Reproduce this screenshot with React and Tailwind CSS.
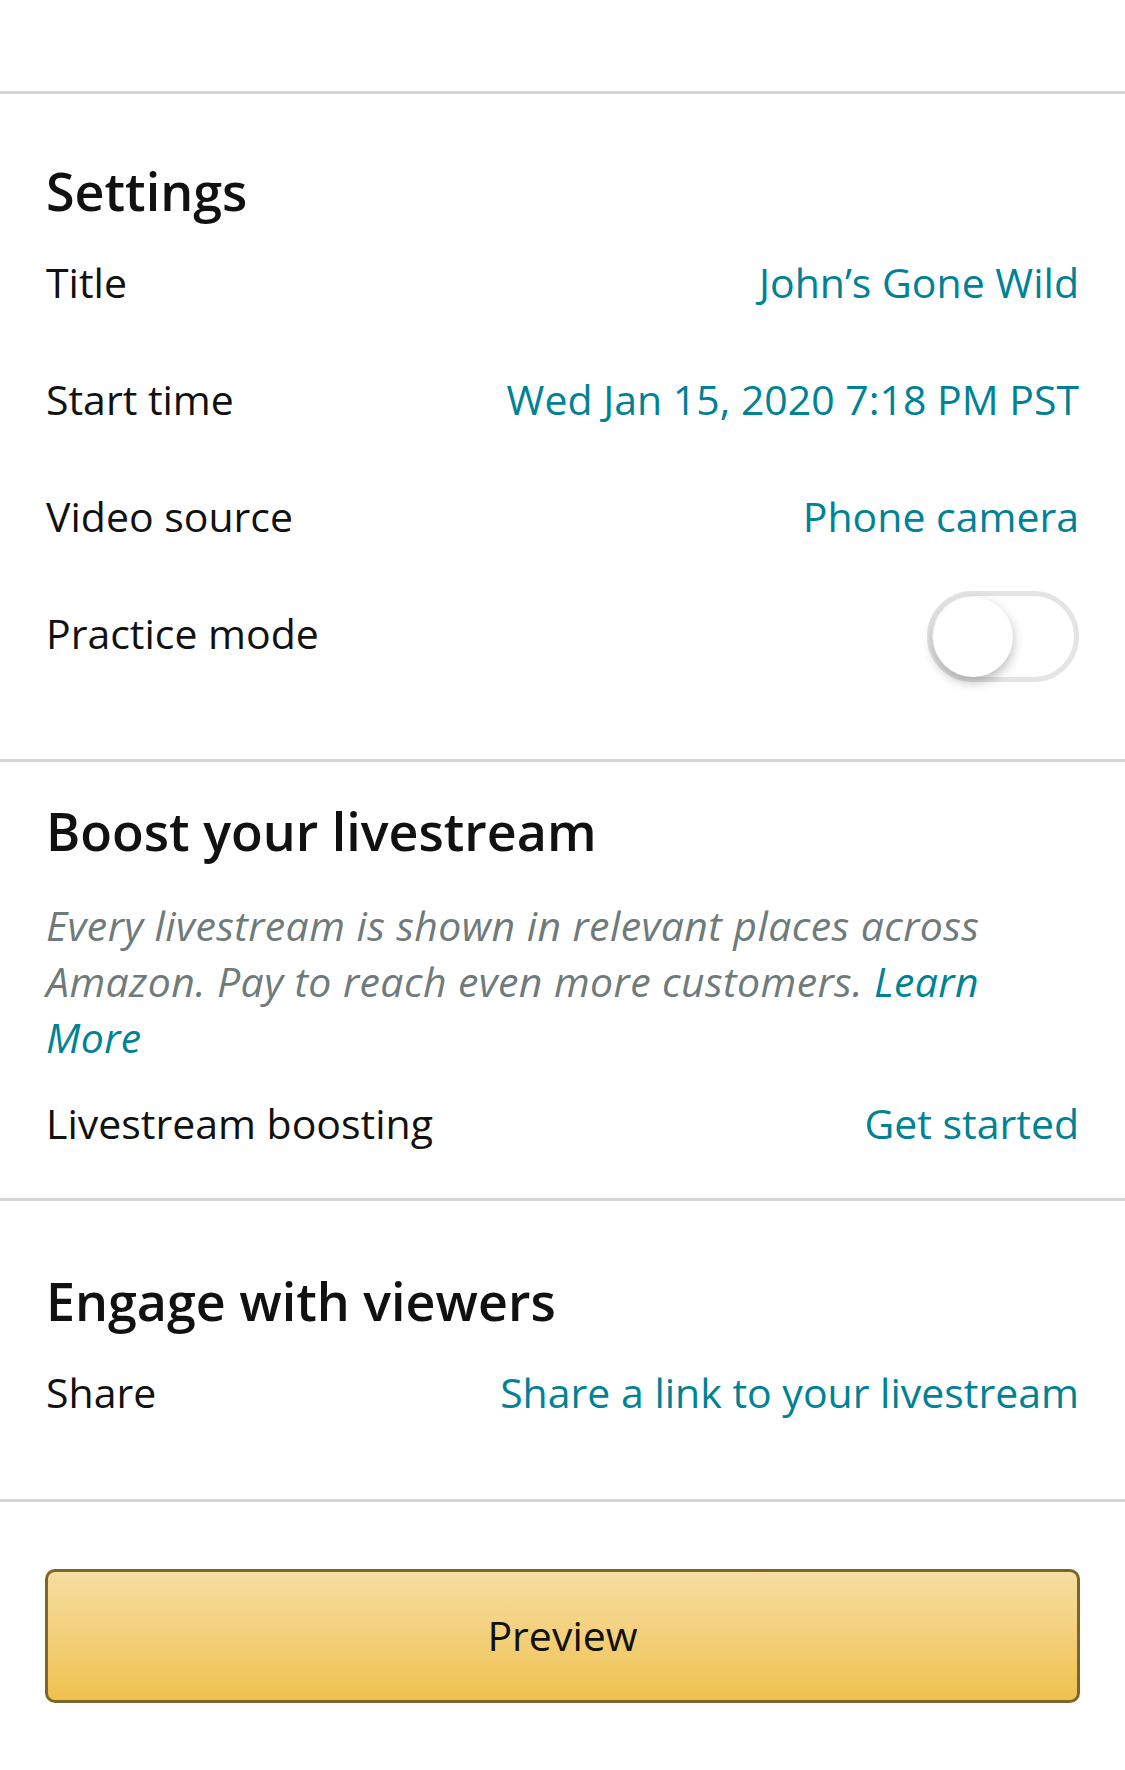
import React, { useState } from 'react';

const font = { fontFamily: '"Open Sans", "Noto Sans", sans-serif' };

const Row = ({ label, value, children, className = '' }) => (
  <div className={`flex h-[117px] items-center justify-between ${className}`}>
    <span className="text-[41px] text-[#111111]">{label}</span>
    {children || <span className="text-[41px] text-[#008296]">{value}</span>}
  </div>
);

const Toggle = ({ on, onChange }) => (
  <button
    onClick={() => onChange(!on)}
    className="mt-[6px] flex h-[91px] w-[152px] items-center rounded-full border-[5px] border-[#e4e4e4] bg-white px-px"
  >
    <span className="h-[80px] w-[80px] rounded-full bg-white shadow-[0_5px_12px_rgba(0,0,0,0.28)]" />
  </button>
);

const Divider = () => <div className="h-[3px] bg-[#d5d5d5]" />;

const Heading = ({ children }) => (
  <h2 className="text-[52px] leading-[66px] font-semibold text-[#111111]">{children}</h2>
);

export default function App() {
  const [practice, setPractice] = useState(false);

  return (
    <div className="min-h-[1770px] w-full bg-white" style={font}>
      <div className="h-[91px]" />
      <Divider />

      {/* Settings */}
      <section className="px-[46px] pt-[64px] pb-[67px]">
        <Heading>Settings</Heading>
        <Row label="Title" value="John’s Gone Wild" />
        <Row label="Start time" value="Wed Jan 15, 2020 7:18 PM PST" />
        <Row label="Video source" value="Phone camera" />
        <Row label="Practice mode">
          <Toggle on={practice} onChange={setPractice} />
        </Row>
      </section>
      <Divider />

      {/* Boost */}
      <section className="px-[46px] pt-[36px] pb-[16px]">
        <Heading>Boost your livestream</Heading>
        <p className="mt-[33px] max-w-[960px] text-[41px] leading-[56px] tracking-[0.4px] italic text-[#6f7b7b]">
          Every livestream is shown in relevant places across Amazon. Pay to reach even more customers.{' '}
          <span className="text-[#008296]">Learn</span> <span className="text-[#008296]">More</span>
        </p>
        <Row label="Livestream boosting" value="Get started" />
      </section>
      <Divider />

      {/* Engage */}
      <section className="px-[46px] pt-[67px] pb-[48px]">
        <Heading>Engage with viewers</Heading>
        <Row label="Share" value="Share a link to your livestream" />
      </section>
      <Divider />

      <div className="px-[45px] pt-[67px]">
        <button className="flex h-[134px] w-full items-center justify-center rounded-[10px] border-[3px] border-[#80652a] bg-gradient-to-b from-[#f6dea0] to-[#efc14c] text-[41px] text-[#111111]">
          Preview
        </button>
      </div>
    </div>
  );
}
